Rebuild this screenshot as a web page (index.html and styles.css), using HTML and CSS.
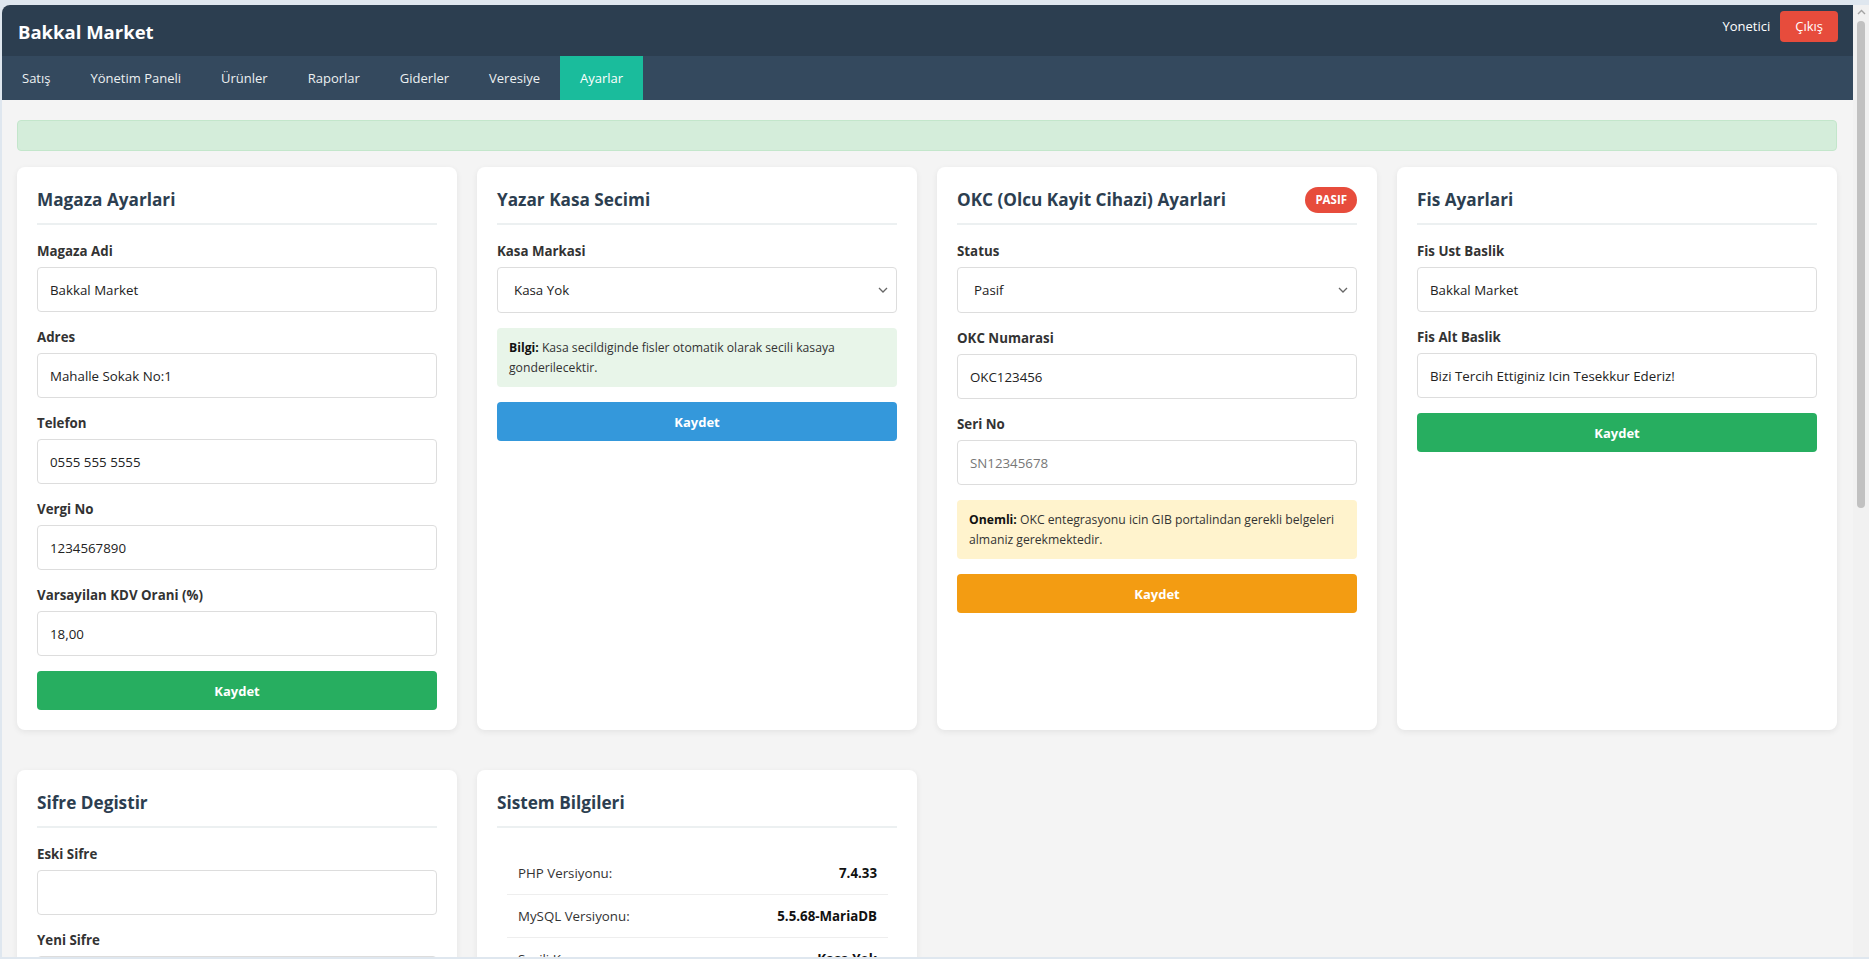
FILE: index.html
```html
<!DOCTYPE html>
<html lang="tr">
<head>
<meta charset="utf-8">
<title>Bakkal Market - Ayarlar</title>
<link rel="stylesheet" href="styles.css">
</head>
<body>
<div class="window">
  <div class="app">
    <header class="topbar">
      <div class="brand">Bakkal Market</div>
      <div class="user">
        <span class="user-name">Yonetici</span>
        <a class="logout" href="#">Çıkış</a>
      </div>
    </header>
    <nav class="nav">
      <a class="nav-item" href="#">Satış</a>
      <a class="nav-item" href="#">Yönetim Paneli</a>
      <a class="nav-item" href="#">Ürünler</a>
      <a class="nav-item" href="#">Raporlar</a>
      <a class="nav-item" href="#">Giderler</a>
      <a class="nav-item" href="#">Veresiye</a>
      <a class="nav-item active" href="#">Ayarlar</a>
    </nav>
    <main class="main">
      <div class="alert"></div>
      <div class="grid">
        <section class="card">
          <h3 class="card-title">Magaza Ayarlari</h3>
          <div class="group"><label class="label">Magaza Adi</label><input class="input" value="Bakkal Market"></div>
          <div class="group"><label class="label">Adres</label><input class="input" value="Mahalle Sokak No:1"></div>
          <div class="group"><label class="label">Telefon</label><input class="input" value="0555 555 5555"></div>
          <div class="group"><label class="label">Vergi No</label><input class="input" value="1234567890"></div>
          <div class="group"><label class="label">Varsayilan KDV Orani (%)</label><input class="input" value="18,00"></div>
          <button class="btn btn-green">Kaydet</button>
        </section>

        <section class="card">
          <h3 class="card-title">Yazar Kasa Secimi</h3>
          <div class="group"><label class="label">Kasa Markasi</label>
            <div class="select-wrap">
              <select class="select"><option>Kasa Yok</option></select>
              <svg class="chev" width="10" height="6" viewBox="0 0 10 6"><path d="M1 1l4 4 4-4" fill="none" stroke="#666" stroke-width="1.3"/></svg>
            </div>
          </div>
          <div class="note note-green"><b>Bilgi:</b> Kasa secildiginde fisler otomatik olarak secili kasaya gonderilecektir.</div>
          <button class="btn btn-blue">Kaydet</button>
        </section>

        <section class="card">
          <h3 class="card-title">OKC (Olcu Kayit Cihazi) Ayarlari <span class="badge">PASIF</span></h3>
          <div class="group"><label class="label">Status</label>
            <div class="select-wrap">
              <select class="select"><option>Pasif</option></select>
              <svg class="chev" width="10" height="6" viewBox="0 0 10 6"><path d="M1 1l4 4 4-4" fill="none" stroke="#666" stroke-width="1.3"/></svg>
            </div>
          </div>
          <div class="group"><label class="label">OKC Numarasi</label><input class="input" value="OKC123456"></div>
          <div class="group"><label class="label">Seri No</label><input class="input" placeholder="SN12345678"></div>
          <div class="note note-yellow"><b>Onemli:</b> OKC entegrasyonu icin GIB portalindan gerekli belgeleri almaniz gerekmektedir.</div>
          <button class="btn btn-orange">Kaydet</button>
        </section>

        <section class="card">
          <h3 class="card-title">Fis Ayarlari</h3>
          <div class="group"><label class="label">Fis Ust Baslik</label><input class="input" value="Bakkal Market"></div>
          <div class="group"><label class="label">Fis Alt Baslik</label><input class="input" value="Bizi Tercih Ettiginiz Icin Tesekkur Ederiz!"></div>
          <button class="btn btn-green">Kaydet</button>
        </section>

        <section class="card">
          <h3 class="card-title">Sifre Degistir</h3>
          <div class="group"><label class="label">Eski Sifre</label><input class="input" type="password"></div>
          <div class="group"><label class="label">Yeni Sifre</label><input class="input" type="password"></div>
          <div class="group"><label class="label">Yeni Sifre (Tekrar)</label><input class="input" type="password"></div>
          <button class="btn btn-green">Kaydet</button>
        </section>

        <section class="card">
          <h3 class="card-title">Sistem Bilgileri</h3>
          <table class="info-table">
            <tr><td>PHP Versiyonu:</td><td class="val">7.4.33</td></tr>
            <tr><td>MySQL Versiyonu:</td><td class="val">5.5.68-MariaDB</td></tr>
            <tr><td>Secili Kasa:</td><td class="val">Kasa Yok</td></tr>
            <tr><td>OKC Durumu:</td><td class="val">Pasif</td></tr>
          </table>
        </section>
      </div>
    </main>
  </div>
  <div class="scrollbar">
    <svg class="sb-arrow" width="9" height="6" viewBox="0 0 9 6"><path d="M1 5l3.5-3.5L8 5" fill="none" stroke="#a3a3a3" stroke-width="1.4"/></svg>
    <div class="sb-thumb"></div>
  </div>
</div>
</body>
</html>
```

FILE: styles.css
```css
* { box-sizing: border-box; }

html, body {
  margin: 0;
  height: 959px;
  overflow: hidden;
}

body {
  background: #dfe7ef;
  font-family: "Open Sans", "Noto Sans", sans-serif;
  color: #333;
}

.window {
  display: flex;
  height: 959px;
  padding: 5px 0 2px 2px;
}

.app {
  flex: 1;
  min-width: 0;
  display: flex;
  flex-direction: column;
  background: #f4f4f4;
  border-top-left-radius: 8px;
  overflow: hidden;
}

.topbar {
  height: 51px;
  flex: none;
  background: #2c3e50;
  display: flex;
  align-items: center;
  justify-content: space-between;
  padding: 2px 15px 0 16px;
}

.brand {
  color: #fff;
  font-weight: 700;
  font-size: 18.5px;
}

.user {
  display: flex;
  align-items: center;
  gap: 10px;
  margin-top: -11px;
}

.user-name {
  color: #fff;
  font-size: 13px;
}

.logout {
  display: block;
  background: #e74c3c;
  color: #fff;
  text-decoration: none;
  font-size: 13px;
  height: 31px;
  line-height: 31px;
  padding: 0 15px;
  border-radius: 4px;
}

.nav {
  height: 44px;
  flex: none;
  background: #34495e;
  display: flex;
}

.nav-item {
  display: block;
  padding: 0 20px;
  line-height: 44px;
  color: #ecf0f1;
  text-decoration: none;
  font-size: 13px;
}

.nav-item.active {
  background: #1abc9c;
  color: #fff;
}

.main {
  flex: 1;
  padding: 20px 16px 0 15px;
}

.alert {
  height: 31px;
  background: #d4edda;
  border: 1px solid #c3e6cb;
  border-radius: 4px;
  margin-bottom: 16px;
}

.grid {
  display: grid;
  grid-template-columns: repeat(4, 1fr);
  column-gap: 20px;
  row-gap: 40px;
  align-items: stretch;
}

.card {
  background: #fff;
  border-radius: 8px;
  padding: 20px;
  box-shadow: 0 2px 6px rgba(0, 0, 0, 0.07);
}

.card-title {
  margin: 0 0 16px;
  font-size: 17.2px;
  line-height: 26px;
  font-weight: 700;
  color: #2c3e50;
  padding-bottom: 10px;
  border-bottom: 2px solid #ecf0f1;
  display: flex;
  align-items: center;
  justify-content: space-between;
}

.badge {
  display: inline-block;
  background: #e74c3c;
  color: #fff;
  font-size: 11.5px;
  font-weight: 700;
  height: 26px;
  line-height: 26px;
  padding: 0 10px;
  border-radius: 13px;
}

.group {
  margin-bottom: 15px;
}

.label {
  display: block;
  font-size: 13.3px;
  font-weight: 700;
  line-height: 20px;
  margin-bottom: 6px;
  color: #333;
}

.input,
.select {
  display: block;
  width: 100%;
  height: 45px;
  border: 1px solid #ddd;
  border-radius: 4px;
  padding: 0 12px;
  font-family: inherit;
  font-size: 13.3px;
  color: #222;
  background: #fff;
  outline: none;
}

.input::placeholder {
  color: #777;
}

.select-wrap {
  position: relative;
}

.select {
  height: 46px;
  padding: 0 16px;
  appearance: none;
  -webkit-appearance: none;
}

.chev {
  position: absolute;
  right: 9px;
  top: 20px;
}

.note {
  font-size: 12.2px;
  line-height: 20px;
  padding: 10px 12px 9px;
  border-radius: 4px;
  margin-bottom: 15px;
  color: #333;
}

.note b {
  color: #111;
}

.note-green {
  background: #e8f5e9;
}

.note-yellow {
  background: #fff3cd;
}

.btn {
  display: block;
  width: 100%;
  height: 39px;
  border: none;
  border-radius: 4px;
  color: #fff;
  font-family: inherit;
  font-size: 13px;
  font-weight: 700;
}

.btn-green { background: #27ae60; }
.btn-blue { background: #3498db; }
.btn-orange { background: #f39c12; }

.info-table {
  width: calc(100% - 19px);
  margin: 24px 10px 0;
  border-collapse: collapse;
  font-size: 13.3px;
}

.info-table td {
  padding: 11px;
  line-height: 20px;
  border-bottom: 1px solid #eee;
  color: #333;
}

.info-table td.val {
  text-align: right;
  font-weight: 700;
  color: #111;
}

.scrollbar {
  width: 16px;
  flex: none;
  background: #f1f1f1;
  display: flex;
  flex-direction: column;
  align-items: center;
  padding-top: 4px;
}

.sb-arrow {
  display: block;
  margin-bottom: 6px;
}

.sb-thumb {
  width: 8px;
  height: 487px;
  background: #c1c1c1;
  border-radius: 4px;
}
```
